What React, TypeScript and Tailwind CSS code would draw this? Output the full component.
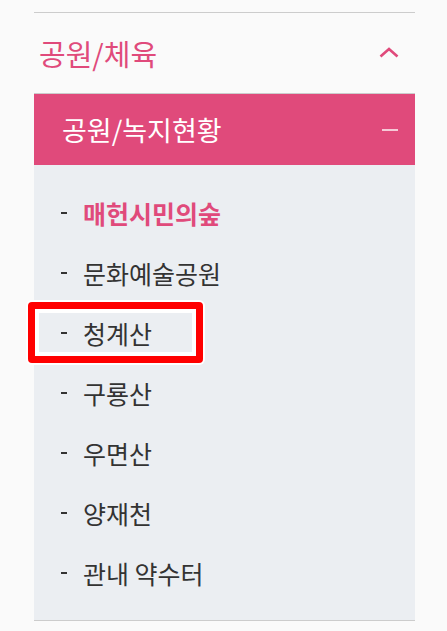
import React from "react";

const FONT = { fontFamily: '"Noto Sans CJK KR", "Noto Sans", sans-serif' };

const items = [
  { label: "매헌시민의숲", active: true },
  { label: "문화예술공원" },
  { label: "청계산", marked: true },
  { label: "구룡산" },
  { label: "우면산" },
  { label: "양재천" },
  { label: "관내 약수터" },
];

export default function App() {
  return (
    <div className="min-h-[631px] w-[447px] bg-[#fafafa] pt-3" style={FONT}>
      <div className="ml-[34px] w-[381px] border-t border-[#cccccc]">
        {/* 1depth */}
        <div className="flex h-[81px] items-center justify-between border-b border-[#cccccc] pl-[5px] pr-[16px]">
          <span className="text-[29px] leading-none text-[#e04a7b]">공원/체육</span>
          <svg width="20" height="11" viewBox="0 0 20 11" className="mt-[-2px]">
            <path d="M1.5 9.5 L10 2 L18.5 9.5" fill="none" stroke="#e04a7b" strokeWidth="2.6" />
          </svg>
        </div>

        {/* 2depth */}
        <div className="flex h-[71px] items-center justify-between bg-[#e04a7b] pl-[28px] pr-[17px]">
          <span className="text-[27px] leading-none text-white">공원/녹지현황</span>
          <span className="block h-[2px] w-[16px] bg-white/70" />
        </div>

        {/* 3depth */}
        <ul className="border-b border-[#cccccc] bg-[#ebeef2] pt-[18px] pb-[17px]">
          {items.map((it) => (
            <li key={it.label} className="relative flex h-[60px] items-center pl-[27px]">
              <span className="mr-[16px] block h-[2px] w-[6px] bg-[#333333]" />
              <span
                className={
                  it.active
                    ? "text-[25px] font-bold leading-none text-[#e04a7b]"
                    : "text-[25px] leading-none text-[#333333]"
                }
              >
                {it.label}
              </span>
              {it.marked && (
                <span className="pointer-events-none absolute left-[-6px] top-[-1px] h-[61px] w-[175px] rounded-[4px] border-[7px] border-[#ff0000] shadow-[0_0_0_2px_#ffffff,inset_0_0_0_4px_#ffffff]" />
              )}
            </li>
          ))}
        </ul>
      </div>
    </div>
  );
}
